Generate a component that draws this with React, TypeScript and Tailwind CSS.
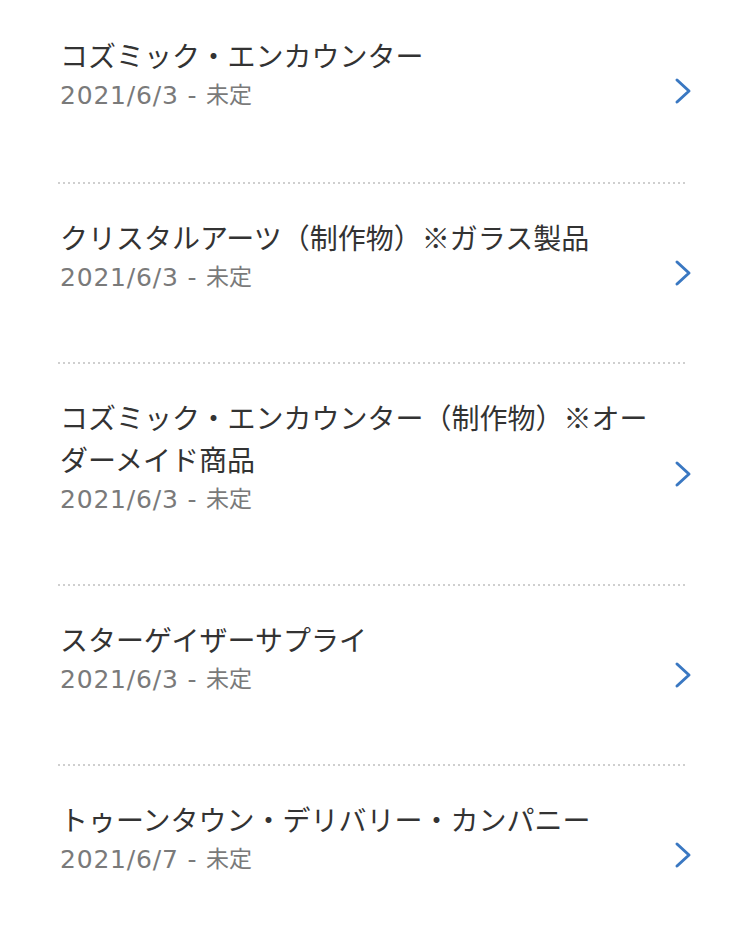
type Event = {
    title: string;
    start: string;
    end: string;
};

const events: Event[] = [
    { title: 'コズミック・エンカウンター', start: '2021/6/3', end: '未定' },
    { title: 'クリスタルアーツ（制作物）※ガラス製品', start: '2021/6/3', end: '未定' },
    { title: 'コズミック・エンカウンター（制作物）※オーダーメイド商品', start: '2021/6/3', end: '未定' },
    { title: 'スターゲイザーサプライ', start: '2021/6/3', end: '未定' },
    { title: 'トゥーンタウン・デリバリー・カンパニー', start: '2021/6/7', end: '未定' },
];

function Chevron() {
    return (
        <svg width="18" height="28" viewBox="0 0 18 28" fill="none" className="shrink-0">
            <polyline points="3,3 15,14 3,25" stroke="#3a78c2" strokeWidth="3" strokeLinecap="round" strokeLinejoin="round" />
        </svg>
    );
}

export default function App() {
    return (
        <div className="w-[750px] min-h-[941px] bg-white font-['Noto_Sans_CJK_JP','Noto_Sans',sans-serif]">
            {events.map((ev, i) => (
                <div key={i}>
                    {i > 0 && (
                        <div className="ml-[58px] mr-[64px] h-[2px] bg-[linear-gradient(to_right,#cfcfcf_40%,transparent_40%)] bg-[length:5px_2px]" />
                    )}
                    <div className="flex items-center pl-[60px] pr-[58px]">
                        <div className={`w-[600px] ${i === 0 ? 'pt-[34px] pb-[70px]' : 'pt-[32px] pb-[68px]'}`}>
                            <p className="text-[28px] leading-[42px] text-[#333333]">{ev.title}</p>
                            <p className="h-[36px] flex items-baseline text-[#7a7a7a] whitespace-pre">
                                <span className="font-['DejaVu_Sans',sans-serif] text-[25px] leading-[36px] tracking-[0.8px]">{ev.start} - </span>
                                <span className="text-[23px] leading-[36px] relative -top-[1px]">{ev.end}</span>
                            </p>
                        </div>
                        <div className="ml-auto flex items-center">
                            <Chevron />
                        </div>
                    </div>
                </div>
            ))}
        </div>
    );
}
